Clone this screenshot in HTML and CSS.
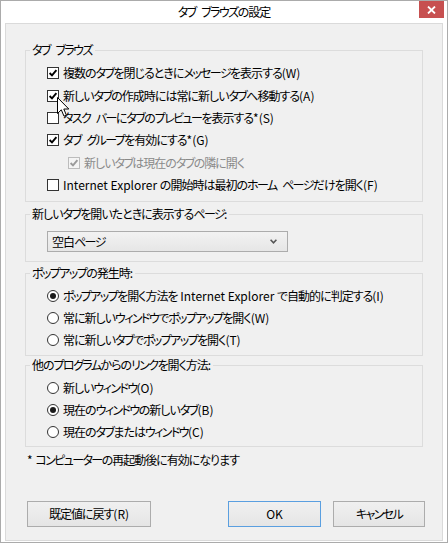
FILE: index.html
```html
<!DOCTYPE html>
<html lang="ja">
<head>
<meta charset="utf-8">
<title>タブ ブラウズの設定</title>
<link rel="stylesheet" href="styles.css">
</head>
<body>
<div class="window">
  <div class="titlebar">
    <span class="title"><span class="k">タブ ブラウズ</span>の設定</span>
    <div class="close" aria-label="閉じる">
      <svg width="9" height="8" viewBox="0 0 9 8"><path d="M1 0.5 L8 7.5 M8 0.5 L1 7.5" stroke="#fff" stroke-width="1.8" fill="none"/></svg>
    </div>
  </div>
  <div class="client">
    <fieldset class="group g1">
      <legend><span class="k">タブ ブラウズ</span></legend>
      <div class="opt tall"><span class="cb"><svg viewBox="0 0 10 10"><polyline points="1.6,5 4,7.4 8.4,2.2" /></svg></span><span>複数の<span class="k">タブ</span>を閉じるときに<span class="k">メッセージ</span>を表示する<span class="lat">(W)</span></span></div>
      <div class="opt tall"><span class="cb"><svg viewBox="0 0 10 10"><polyline points="1.6,5 4,7.4 8.4,2.2" /></svg></span><span>新しい<span class="k">タブ</span>の作成時には常に新しい<span class="k">タブ</span>へ移動する<span class="lat">(A)</span></span></div>
      <div class="opt tall"><span class="cb"></span><span><span class="k">タスク バー</span>に<span class="k">タブ</span>の<span class="k">プレビュー</span>を表示する<span class="lat">*(S)</span></span></div>
      <div class="opt tall"><span class="cb"><svg viewBox="0 0 10 10"><polyline points="1.6,5 4,7.4 8.4,2.2" /></svg></span><span><span class="k">タブ グループ</span>を有効にする<span class="lat">*(G)</span></span></div>
      <div class="opt tall sub disabled"><span class="cb"><svg viewBox="0 0 10 10"><polyline points="1.6,5 4,7.4 8.4,2.2" /></svg></span><span>新しい<span class="k">タブ</span>は現在の<span class="k">タブ</span>の隣に開く</span></div>
      <div class="opt tall"><span class="cb"></span><span><span class="lat">Internet Explorer </span>の開始時は最初の<span class="k">ホーム ページ</span>だけを開く<span class="lat">(F)</span></span></div>
    </fieldset>

    <fieldset class="group g2">
      <legend>新しい<span class="k">タブ</span>を開いたときに表示する<span class="k">ページ</span>:</legend>
      <div class="combo">
        <span>空白<span class="k">ページ</span></span>
        <svg width="7" height="5" viewBox="0 0 7 5"><polyline points="0.6,0.8 3.5,3.8 6.4,0.8" fill="none" stroke="#555" stroke-width="1.6"/></svg>
      </div>
    </fieldset>

    <fieldset class="group g3">
      <legend><span class="k">ポップアップ</span>の発生時:</legend>
      <div class="opt"><span class="rb on"></span><span><span class="k">ポップアップ</span>を開く方法を<span class="lat"> Internet Explorer </span>で自動的に判定する<span class="lat">(I)</span></span></div>
      <div class="opt"><span class="rb"></span><span>常に新しい<span class="k">ウィンドウ</span>で<span class="k">ポップアップ</span>を開く<span class="lat">(W)</span></span></div>
      <div class="opt"><span class="rb"></span><span>常に新しい<span class="k">タブ</span>で<span class="k">ポップアップ</span>を開く<span class="lat">(T)</span></span></div>
    </fieldset>

    <fieldset class="group g4">
      <legend>他の<span class="k">プログラム</span>からの<span class="k">リンク</span>を開く方法:</legend>
      <div class="opt"><span class="rb"></span><span>新しい<span class="k">ウィンドウ</span><span class="lat">(O)</span></span></div>
      <div class="opt"><span class="rb on"></span><span>現在の<span class="k">ウィンドウ</span>の新しい<span class="k">タブ</span><span class="lat">(B)</span></span></div>
      <div class="opt"><span class="rb"></span><span>現在の<span class="k">タブ</span>または<span class="k">ウィンドウ</span><span class="lat">(C)</span></span></div>
    </fieldset>

    <p class="note"><span class="lat">* </span><span class="k">コンピューター</span>の再起動後に有効になります</p>

    <div class="buttons">
      <button class="btn reset">既定値に戻す<span class="lat">(R)</span></button>
      <button class="btn ok"><span class="lat">OK</span></button>
      <button class="btn cancel"><span class="k">キャンセル</span></button>
    </div>
  </div>
  <svg class="cursor" width="13" height="21" viewBox="0 0 13 21">
    <path d="M0.5 0.5 L0.5 16.5 L4.3 12.8 L7 19.2 L9.4 18.2 L6.8 12 L11.8 12 Z" fill="#fff" stroke="#000" stroke-width="1" stroke-linejoin="miter"/>
  </svg>
</div>
</body>
</html>
```

FILE: styles.css
```css
html, body {
  margin: 0;
  padding: 0;
  background: #fff;
}

body {
  font-family: "Noto Sans CJK JP", "Noto Sans", sans-serif;
  font-size: 12px;
  font-feature-settings: "palt";
  letter-spacing: -1px;
  word-spacing: 2px;
  color: #000;
}

.lat {
  letter-spacing: 0;
  word-spacing: 0;
}

.k {
  letter-spacing: -1.6px;
  word-spacing: 4.5px;
}

.window {
  position: relative;
  width: 448px;
  height: 543px;
  box-sizing: border-box;
  border: 1px solid #ababab;
  background: #fff;
  padding: 0 4px 1px 4px;
  display: flex;
  flex-direction: column;
}

.titlebar {
  height: 22px;
  line-height: 22px;
  text-align: center;
  flex: none;
}

.title {
  font-size: 12px;
  color: #000;
}

.close {
  position: absolute;
  top: 0;
  right: 3px;
  width: 25px;
  height: 17px;
  background: #c75050;
  display: flex;
  align-items: center;
  justify-content: center;
}

.close svg {
  display: block;
}

.client {
  flex: 1;
  background: #f0f0f0;
  border: 1px solid #dadada;
  padding: 18px 19px 0 19px;
}

.group {
  margin: 0;
  border: 1px solid #dcdcdc;
  min-width: 0;
  padding: 4px 0 3px 0;
}

.group legend {
  padding: 0 3px 0 2px;
  margin-left: 4px;
  line-height: 16px;
  font-size: 12px;
}

.g1 {
  padding-bottom: 5px;
}

.g2 {
  margin-top: 4px;
  padding-top: 9px;
  padding-bottom: 9px;
}

.g3 {
  margin-top: 3px;
  padding-bottom: 4px;
}

.g4 {
  margin-top: 1px;
  padding-bottom: 3px;
}

.opt {
  display: flex;
  align-items: center;
  height: 22px;
  margin-left: 21px;
  line-height: 16px;
  white-space: nowrap;
}

.opt.tall {
  height: 22.4px;
}

.opt.sub {
  margin-left: 42px;
}

.cb {
  flex: none;
  width: 12px;
  height: 12px;
  box-sizing: border-box;
  border: 1px solid #333;
  background: #fff;
  margin-right: 4px;
  display: flex;
  align-items: center;
  justify-content: center;
}

.cb svg {
  width: 10px;
  height: 10px;
  display: block;
}

.cb polyline {
  fill: none;
  stroke: #000;
  stroke-width: 1.9;
}

.disabled {
  color: #8a8a8a;
}

.disabled .cb {
  border-color: #bcbcbc;
  background: #f4f4f4;
}

.disabled .cb polyline {
  stroke: #9a9a9a;
}

.rb {
  flex: none;
  width: 12px;
  height: 12px;
  box-sizing: border-box;
  border: 1px solid #333;
  border-radius: 50%;
  background: #fff;
  margin-right: 4px;
  display: flex;
  align-items: center;
  justify-content: center;
}

.rb.on::after {
  content: "";
  width: 6px;
  height: 6px;
  border-radius: 50%;
  background: #1a1a1a;
}

.combo {
  width: 241px;
  height: 21px;
  margin-left: 21px;
  box-sizing: border-box;
  border: 1px solid #acacac;
  background: linear-gradient(#f2f2f2, #e6e6e6);
  display: flex;
  align-items: center;
  justify-content: space-between;
  padding: 0 10px 0 4px;
  line-height: 16px;
}

.combo svg {
  display: block;
}

.note {
  margin: 5px 0 0 2px;
  line-height: 16px;
}

.buttons {
  display: flex;
  margin: 33px -2px 0 2px;
}

.btn {
  height: 26px;
  box-sizing: border-box;
  border: 1px solid #acacac;
  background: linear-gradient(#f0f0f0, #e5e5e5);
  font-family: inherit;
  font-size: 12px;
  font-feature-settings: "palt";
  letter-spacing: -1px;
  color: #000;
  padding: 0;
  line-height: 24px;
}

.btn .lat {
  letter-spacing: 0;
}

.btn .k {
  letter-spacing: -1.6px;
}

.reset {
  width: 124px;
}

.ok {
  width: 93px;
  margin-left: auto;
  border-color: #5a9fe0;
}

.cancel {
  width: 92px;
  margin-left: 12px;
}

.cursor {
  position: absolute;
  left: 56px;
  top: 96px;
}
```
